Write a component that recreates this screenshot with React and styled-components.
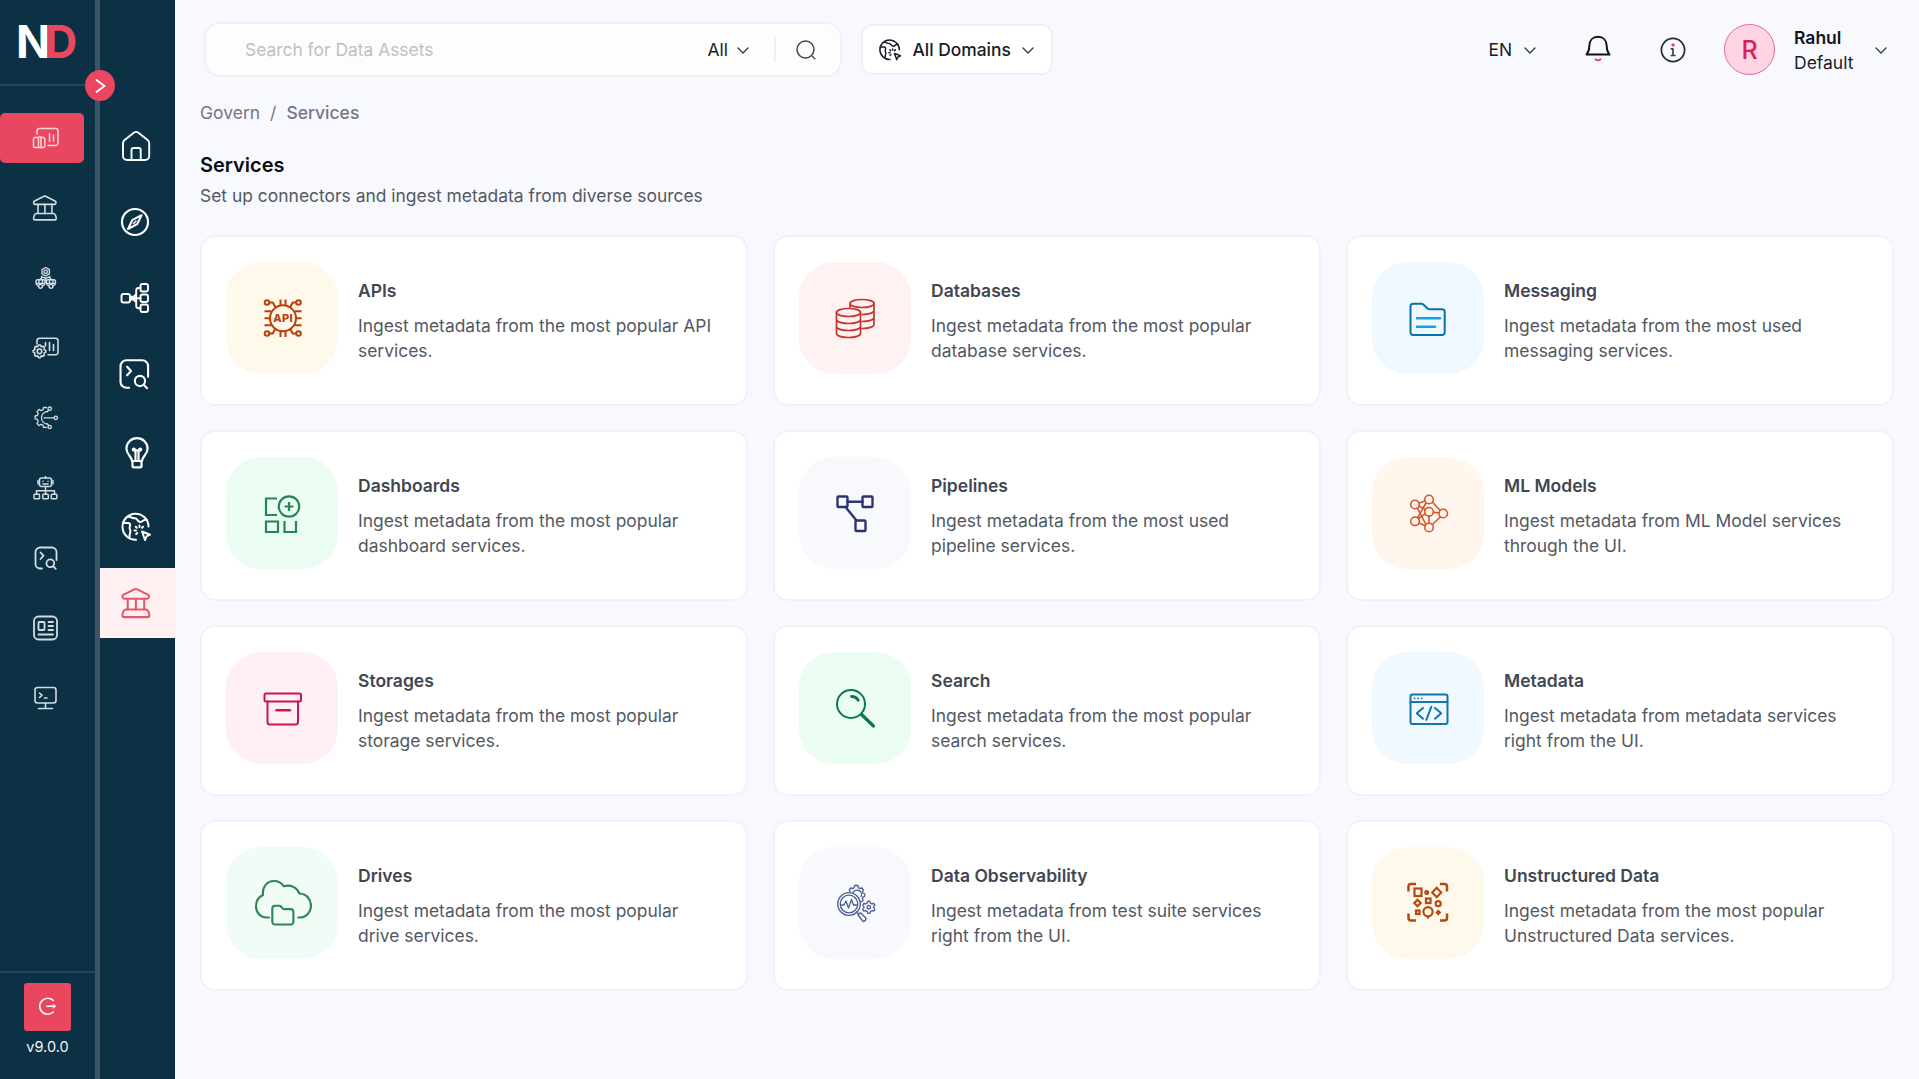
import React from "react";
import styled, { createGlobalStyle } from "styled-components";

const GlobalStyle = createGlobalStyle`
  * {
    box-sizing: border-box;
  }
  body {
    margin: 0;
    background: #f8f9fe;
    font-family: Inter, "Liberation Sans", sans-serif;
    color: #181d27;
  }
  p, h1, h2 {
    margin: 0;
  }
`;

const Page = styled.div`
  display: flex;
  height: 1079px;
  overflow: hidden;
`;

const PrimaryNav = styled.nav`
  display: flex;
  flex-direction: column;
  width: 95px;
  background: #0c3144;
`;

const Divider = styled.div`
  position: relative;
  width: 5px;
  background: #3c5566;
`;

const Toggle = styled.button`
  position: absolute;
  top: 70px;
  left: -10px;
  display: flex;
  align-items: center;
  justify-content: center;
  width: 30px;
  height: 31px;
  padding: 0;
  border: none;
  border-radius: 50%;
  background: #e9475f;
  color: #fff;
`;

const Logo = styled.div`
  height: 86px;
  padding: 13px 0 0 16px;
  border-bottom: 2px solid #234a5c;
  color: #fff;
  font-size: 45px;
  font-weight: 700;
  line-height: 58px;
  letter-spacing: -5.5px;

  span {
    color: #e9475f;
  }
`;

const PrimaryList = styled.div`
  display: flex;
  flex-direction: column;
  flex: 1;
  gap: 20px;
  padding-top: 27px;
`;

const PrimaryItem = styled.a`
  display: flex;
  align-items: center;
  width: 84px;
  height: 50px;
  padding-left: 29px;
  border-radius: 5px;
  color: ${({ $active }) => ($active ? "#fbd5da" : "#d3dce0")};
  background: ${({ $active }) => ($active ? "#e9475f" : "transparent")};
`;

const NavFooter = styled.div`
  display: flex;
  flex-direction: column;
  align-items: center;
  height: 108px;
  padding-top: 10px;
  border-top: 2px solid #234a5c;
  color: #f1f4f6;
  font-size: 14.5px;
  line-height: 32px;
`;

const LogoutButton = styled.button`
  display: flex;
  align-items: center;
  justify-content: center;
  width: 47px;
  height: 48px;
  padding: 0;
  border: none;
  border-radius: 3px;
  background: #e9475f;
  color: #fff;
`;

const SecondaryNav = styled.nav`
  display: flex;
  flex-direction: column;
  width: 75px;
  padding-top: 110px;
  background: #0c3144;
`;

const SecondaryItem = styled.a`
  display: flex;
  align-items: center;
  justify-content: center;
  height: ${({ $height }) => $height}px;
  padding-right: ${({ $inset }) => $inset || 5}px;
  margin-top: ${({ $active }) => ($active ? 6 : 0)}px;
  color: ${({ $active }) => ($active ? "#e9546b" : "#fff")};
  background: ${({ $active }) => ($active ? "#fff0f1" : "transparent")};
`;

const Main = styled.main`
  flex: 1;
  padding: 0 25px;
`;

const Header = styled.header`
  display: flex;
  align-items: center;
  height: 99px;
  padding-left: 4px;
`;

const SearchBar = styled.div`
  display: flex;
  align-items: center;
  width: 638px;
  height: 55px;
  padding: 0 24px 0 39px;
  border: 2px solid #f0f1f8;
  border-radius: 16px;
  background: #fdfdfd;
`;

const Placeholder = styled.span`
  flex: 1;
  color: #bfbfbf;
  font-size: 17.4px;
`;

const Dropdown = styled.div`
  display: flex;
  align-items: center;
  gap: ${({ $gap }) => $gap || 8}px;
  font-size: 17.4px;
  font-weight: ${({ $weight }) => $weight || 400};
  color: #181d27;
`;

const Separator = styled.div`
  width: 2px;
  height: 25px;
  margin: 0 20px 0 24px;
  background: #eff1f7;
`;

const DomainSelect = styled(Dropdown)`
  width: 192px;
  height: 51px;
  margin-left: 19px;
  padding-left: 15px;
  border: 2px solid #f0f1f8;
  border-radius: 11px;
  background: #fff;
`;

const HeaderActions = styled.div`
  display: flex;
  align-items: center;
  margin-left: auto;
  padding-right: 6px;
`;

const IconButton = styled.button`
  display: flex;
  padding: 0 0 ${({ $raise }) => $raise || 0}px;
  border: none;
  background: none;
  margin-left: ${({ $left }) => $left}px;
`;

const Avatar = styled.div`
  display: flex;
  align-items: center;
  justify-content: center;
  width: 51px;
  height: 51px;
  margin: 0 19px 0 35px;
  border: 1.5px solid #e8679a;
  border-radius: 50%;
  background: #ffd5e3;
  color: #df1c5c;
  font-size: 25px;
  font-weight: 500;
`;

const UserInfo = styled.div`
  width: 80px;
  font-size: 17.5px;
  line-height: 25px;

  strong {
    display: block;
    font-weight: 600;
    color: #111520;
  }
`;

const Breadcrumb = styled.div`
  display: flex;
  gap: 10px;
  height: 27px;
  color: #757687;
  font-size: 17.5px;
  line-height: 28px;

  span:last-child {
    font-weight: 500;
  }
`;

const PageTitle = styled.h1`
  margin-top: 25px;
  color: #0a0d12;
  font-size: 20px;
  font-weight: 600;
  line-height: 28px;
`;

const PageText = styled.p`
  margin-top: 4px;
  color: #535862;
  font-size: 17.45px;
  line-height: 26px;
`;

const CardGrid = styled.div`
  display: grid;
  grid-template-columns: repeat(3, 1fr);
  grid-auto-rows: 171px;
  gap: 24px 25px;
  margin-top: 26px;
`;

const Card = styled.article`
  display: flex;
  gap: 20px;
  padding: 25px 31px 24px 24px;
  border: 2px solid #f1f2f9;
  border-radius: 15px;
  background: #fff;
`;

const Tile = styled.div`
  display: flex;
  align-items: center;
  justify-content: center;
  flex: none;
  width: 112px;
  height: 112px;
  border-radius: 35px;
  background: ${({ $bg }) => $bg};
  color: ${({ $color }) => $color};
`;

const CardBody = styled.div`
  padding-top: 16px;
`;

const CardTitle = styled.h2`
  color: #414651;
  font-size: 17.5px;
  font-weight: 600;
  line-height: 26px;
`;

const CardText = styled.p`
  margin-top: 9px;
  color: #535862;
  font-size: 17.45px;
  line-height: 25px;
`;

const Stroke = styled.svg`
  display: block;
  flex: none;
  fill: none;
  stroke: currentColor;
  stroke-linecap: round;
  stroke-linejoin: round;
`;

const Icon = ({ size = 32, box = 32, width = 1.6, children }) => (
  <Stroke width={size} height={size} viewBox={`0 0 ${box} ${box}`} strokeWidth={width}>
    {children}
  </Stroke>
);

const Chevron = () => (
  <Stroke width="14" height="14" viewBox="0 0 14 14" strokeWidth="1.4" color="#343a46">
    <path d="M2 5l5 5 5-5" />
  </Stroke>
);

/* navigation icons, 32 x 32 */

const InsightIcon = () => (
  <Icon width={1.5}>
    <path d="M8 12V9a2.500 2.500 0 0 1 2.500-2.500h16A2.500 2.500 0 0 1 29 9v12a2.500 2.500 0 0 1-2.500 2.500H19" />
    <path d="M20.500 11.500v8M24.500 13v6" />
    <path d="M6 15.500h3.500v10H6A1.500 1.500 0 0 1 4.500 24v-7A1.500 1.500 0 0 1 6 15.500zM9.500 25.500h4.800a1.500 1.500 0 0 0 1.500-1.500v-7a1.500 1.500 0 0 0-1.500-1.500H12v10M9.500 15.500l1-1h1l.5 1" />
  </Icon>
);

const GovernIcon = ({ size, width }) => (
  <Icon size={size} width={width}>
    <path d="M15 4.300a2 2 0 0 1 1.600 0l9.800 4.900c1 .6.700 3.200-.9 3.200H6c-1.500 0-1.900-2.600-.8-3.200z" />
    <path d="M9 12.400v9.100M15.900 12.400v9.100M22.900 12.400v9.100" />
    <path d="M7.300 21.500h17.200c1.600 0 2.700 3 2.700 5 0 .9-.5 1.400-1.300 1.400H5.900c-.8 0-1.300-.5-1.300-1.400 0-2 1.100-5 2.700-5z" />
  </Icon>
);

const TeamHubIcon = () => (
  <Icon width={1.400}>
    <path d="m16.700 5.500 3.700 2.100v4.300l-3.700 2.100-3.700-2.100V7.600z" />
    <circle cx="16.700" cy="9.800" r="1.700" />
    <path d="M12.500 14.500c2 2 6.500 2 8.500 0M16.700 16v3M13 15.500l-2 2M20.500 15.500l2 2" />
    <path d="M7 21.500v-2.200a1.500 1.500 0 0 1 1.500-1.500h6a1.500 1.500 0 0 1 1.500 1.500v2.200zM17.500 21.500v-2.200a1.500 1.500 0 0 1 1.500-1.500h6a1.500 1.500 0 0 1 1.500 1.500v2.200zM10 18v3M13.500 18v3M20.500 18v3M24 18v3" />
    <circle cx="11.500" cy="24.300" r="1.900" />
    <circle cx="22" cy="24.300" r="1.900" />
    <path d="M7.500 22.500 9 23.700M15.600 22.500 14 23.700M18 22.500l1.500 1.200M26 22.500 24.500 23.700" />
  </Icon>
);

const ReportSettingsIcon = () => (
  <Icon width={1.600}>
    <path d="M8 12V8.800a2.500 2.500 0 0 1 2.500-2.500h16A2.500 2.500 0 0 1 29 8.800v11.400a2.500 2.500 0 0 1-2.500 2.500H19" />
    <path d="M16.500 10.500v3.500M20.500 10.500v8M24.500 12.500v6" />
    <path d="m8.700 14.700 1-1.700h1.600l1 1.700 2-.3 1.100 1.100-.3 2 1.700 1v1.600l-1.700 1 .3 2-1.100 1.100-2-.3-1 1.700H9.700l-1-1.700-2 .3-1.100-1.100.3-2-1.700-1v-1.600l1.700-1-.3-2 1.100-1.100z" />
    <circle cx="10.500" cy="19.300" r="2.300" />
  </Icon>
);

const AutomationIcon = () => (
  <Icon width={1.300}>
    <path d="M17.500 5.500h-3l-.5 2.300-2 .8-2-1.200-2 2 1.200 2-.8 2.100-2.300.5v2.900l2.300.5.800 2.100-1.200 2 2 2 2-1.200 2 .8.500 2.300h3" />
    <path d="M18.500 9.500c-3.500.3-6 3-6 6.300s2.500 6 6 6.300" />
    <path d="M15 15.800h10M18.500 9.500l1.300-1.700M18.500 22l1.300 1.700" />
    <circle cx="26.800" cy="15.800" r="1.700" />
    <circle cx="20.700" cy="6.700" r="1.700" />
    <circle cx="20.700" cy="25" r="1.700" />
  </Icon>
);

const BotTreeIcon = () => (
  <Icon width={1.500}>
    <rect x="10.500" y="6" width="12" height="8.500" rx="2" />
    <path d="M16.500 4.500V6M9 8.500v3.500M24 8.500v3.500M14 12h5M14 9.200h.1M19 9.200h.1M16.500 14.500v7.500M7.500 22v-3.200h18V22" />
    <rect x="5" y="22.300" width="5.500" height="4.500" rx=".8" />
    <rect x="13.800" y="22.300" width="5.500" height="4.500" rx=".8" />
    <rect x="22.300" y="22.300" width="5.500" height="4.500" rx=".8" />
  </Icon>
);

const QueryIcon = ({ size, width = 1.800 }) => (
  <Icon size={size} width={width}>
    <path d="M13 26.500h-2A4.500 4.500 0 0 1 6.500 22V10A4.500 4.500 0 0 1 11 5.500h12A4.500 4.500 0 0 1 27.500 10v8" />
    <path d="m11.500 10.500 3 3.200-3 3.300" />
    <circle cx="21.300" cy="21.300" r="3.900" />
    <path d="m24.200 24.200 2.500 2.600" />
  </Icon>
);

const NewsIcon = () => (
  <Icon width={1.800}>
    <rect x="5" y="4.500" width="23" height="23" rx="4.500" />
    <rect x="9.500" y="10" width="6" height="8" rx=".8" />
    <path d="M19.500 10H24M19.500 14H24M19.500 18H24M9.500 22.500H24" />
  </Icon>
);

const TerminalIcon = () => (
  <Icon width={1.600}>
    <rect x="6" y="5.500" width="21" height="15.500" rx="2.500" />
    <path d="m10.500 11 2.500 2.300-2.500 2.200M15.500 16H18M16.500 21v5M9.500 26.500h14" />
  </Icon>
);

const HomeIcon = () => (
  <Icon width={1.900}>
    <path d="M3 13.200c0-1.400.5-2.300 1.600-3.200l9.200-7.200c1.500-1.200 3.100-1.200 4.600 0l9.200 7.200c1.100.9 1.600 1.800 1.600 3.200v12.800a4 4 0 0 1-4 4h-18.200a4 4 0 0 1-4-4z" />
    <path d="M11.500 30V20a2 2 0 0 1 2-2h5.200a2 2 0 0 1 2 2v10" />
  </Icon>
);

const CompassIcon = () => (
  <Icon width={2.200}>
    <circle cx="16" cy="16" r="13" />
    <path d="M22.500 9.200 18.300 18l-9.300 5 4.200-8.800z" strokeWidth="2" />
    <path d="m14.500 17.500 2.500-2.500" strokeWidth="1.400" />
  </Icon>
);

const LineageIcon = () => (
  <Icon width={1.900}>
    <rect x="2.500" y="12" width="8.500" height="8.500" rx="2" />
    <rect x="21.500" y="2" width="7.500" height="7.500" rx="2" />
    <rect x="21.500" y="12.500" width="7.500" height="7.500" rx="2" />
    <rect x="21.500" y="22.500" width="7.500" height="7.500" rx="2" />
    <path d="M11 16.200h10.500M21.500 6h-1.800a2.500 2.500 0 0 0-2.500 2.500v15.200a2.500 2.500 0 0 0 2.500 2.500h1.800M11.500 14.800h3l2.500-2.500M11.500 17.600h3l2.500 2.500" />
  </Icon>
);

const BulbIcon = () => (
  <Icon width={2.200}>
    <path d="M13 24c0-4.500-5.600-6.500-5.600-12.500a10.600 10.300 0 0 1 21.200 0C28.600 17.500 23 19.500 23 24z" />
    <path d="M13.500 24v5c0 .9.500 1.400 1.400 1.400h6.200c.9 0 1.400-.5 1.400-1.400v-5M16.500 13v10M19.500 13v10" />
    <circle cx="14.800" cy="12.500" r="1" />
    <circle cx="21.200" cy="12.500" r="1" />
    <path d="M15 13.500h6" />
  </Icon>
);

const GlobeIcon = ({ size, width = 2 }) => (
  <Icon size={size} width={width}>
    <path d="M28.500 15.500A13 13 0 1 0 16 28.700" />
    <path d="M7.500 6c3-1 4.500 1.500 7.500 1.300 2.500-.1 2 3.200 5 3.700 2.500.4 2-2.500 6.500-2.200" />
    <path d="M3 11.500c3 1.500 6-.5 7 1.500s-1.500 3 0 5.500-1 3.500-.5 8" />
    <path d="m22 20.500 8 3.200-3.500 1.700-1.500 3.600z" />
    <path d="M19.500 14.500v1.500M14.500 19.500H16M15.800 15.800l1 1M23 15.800l-1 1M16.200 23l1-1" />
  </Icon>
);

const SearchIcon = () => (
  <Stroke width="20" height="20" viewBox="0 0 20 20" strokeWidth="1.500" color="#414651">
    <circle cx="9.500" cy="9.500" r="8.500" />
    <path d="m16.500 16.500 2.300 2.300" />
  </Stroke>
);

const BellIcon = () => (
  <Icon width={1.900}>
    <path d="M4.500 22.500c2.300-2.700 2.800-5 2.800-8.500 0-5.500 3.400-9.200 8.700-9.200s8.700 3.700 8.700 9.200c0 3.500.5 5.800 2.800 8.500z" stroke="#111" />
    <path d="M13.500 27.300c1.200 1.300 3.800 1.300 5 0" stroke="#ef4458" />
  </Icon>
);

const InfoIcon = () => (
  <Icon width={1.700}>
    <circle cx="16" cy="16" r="11.600" stroke="#2b2b2b" />
    <path d="M14.300 14.800H16V21M14.300 21.500h3.600" stroke="#3c4450" />
    <circle cx="16" cy="11" r="1.200" fill="#ef4458" stroke="#ef4458" strokeWidth="1" />
  </Icon>
);

const LogoutIcon = () => (
  <Stroke width="22" height="22" viewBox="0 0 22 22" strokeWidth="1.600">
    <path d="M16.300 4.500A8 8 0 1 0 16.300 16M10 10.300h8" />
    <path d="M16.500 8.500 18.700 10.300l-2.200 1.800z" fill="currentColor" strokeWidth=".6" />
  </Stroke>
);

/* card icons, 60 x 60 */

const CardIcon = ({ width = 1.600, children }) => (
  <Icon size={60} box={60} width={width}>
    {children}
  </Icon>
);

const ApiLabel = styled.text`
  fill: currentColor;
  stroke: none;
  font-family: Inter, sans-serif;
  font-size: 11px;
  font-weight: 800;
  letter-spacing: 0.3px;
`;

const ApiIcon = () => (
  <CardIcon width={2}>
    <circle cx="31" cy="30.300" r="13" />
    <circle cx="15" cy="14.500" r="2.300" />
    <circle cx="46.500" cy="14.500" r="2.300" />
    <circle cx="15" cy="45.500" r="2.300" />
    <circle cx="46.500" cy="45.500" r="2.300" />
    <path d="M17.500 14.500h3.300l2.200 4M44 14.500h-3.300l-2.200 4M17.500 45.500h3.300l2.200-4M44 45.500h-3.300l-2.200-4" />
    <path d="M28.500 11.500v5.500M33.500 11.500v5.500M28.500 43.500V49M33.500 43.500V49M12.500 23.300h6.500M12.500 30.300h5M12.500 37.300h6.500M43 23.300h6.500M44.500 30.300h5M43 37.300h6.500" strokeLinecap="butt" />
    <ApiLabel x="31" y="34.300" textAnchor="middle">API</ApiLabel>
  </CardIcon>
);

const DatabaseIcon = () => (
  <CardIcon width={1.700}>
    <ellipse cx="23.500" cy="24.500" rx="12" ry="4" />
    <path d="M11.500 24.500v21c0 2.200 5.400 4 12 4s12-1.800 12-4v-21M11.500 31.500c0 2.200 5.400 4 12 4s12-1.800 12-4M11.500 38.500c0 2.200 5.400 4 12 4s12-1.800 12-4" />
    <path d="M25 19.500v-4c0-2.200 5.400-4 12-4s12 1.800 12 4-5.400 4-12 4-12-1.800-12-4" />
    <path d="M49 15.500v21c0 2.200-5.400 4-12 4M49 22.500c0 2.200-5.400 4-12 4M49 29.500c0 2.200-5.400 4-12 4" />
  </CardIcon>
);

const MessagingIcon = () => (
  <CardIcon width={2}>
    <path d="M12.500 18.300a2.500 2.500 0 0 1 2.500-2.500h8.300a3 3 0 0 1 2 .8l4.200 3.900a3 3 0 0 0 2 .8h12.700a2.500 2.500 0 0 1 2.500 2.500v20.700a2.500 2.500 0 0 1-2.500 2.500H15a2.500 2.500 0 0 1-2.500-2.500z" />
    <path d="M19 30.200h23M19 38.800h18" stroke="#12a1e8" strokeWidth="2.600" />
  </CardIcon>
);

const DashboardIcon = () => (
  <CardIcon width={2.200}>
    <g strokeLinejoin="miter" strokeLinecap="butt">
      <path d="M25 15.500H14V32h11M14 38.500h12V49H14zM32.500 38v11H44V38" />
    </g>
    <circle cx="37" cy="23.500" r="10.200" />
    <path d="M37 19v9M32.500 23.500h9" strokeLinecap="butt" />
  </CardIcon>
);

const PipelineIcon = () => (
  <CardIcon width={2.400}>
    <rect x="12.500" y="13.500" width="10" height="10.500" rx="1" />
    <rect x="37.500" y="13.500" width="10" height="10.500" rx="1" />
    <rect x="30.500" y="37.500" width="10" height="10.500" rx="1" />
    <path d="M22.500 18.700h15M20.500 24l11 13.500" />
  </CardIcon>
);

const ModelIcon = () => (
  <CardIcon width={1.600}>
    <circle cx="17" cy="21.500" r="4.300" />
    <circle cx="17" cy="38.300" r="4.300" />
    <circle cx="31" cy="16.500" r="4.300" />
    <circle cx="31" cy="28.800" r="4.300" />
    <circle cx="31" cy="44.500" r="4.300" />
    <circle cx="45.200" cy="30.500" r="4.300" />
    <path d="m21 20 6-2M21 23l6 3.500M19.300 25l8.700 16.500M19.500 34.800 28 20M20.500 35.500l6.500-4.300M21 40l6 2.500M34.500 19.300l7.500 8M35.300 29.300l5.600.6M34.300 41.500l8-7.500M31 33v7" />
  </CardIcon>
);

const StorageIcon = () => (
  <CardIcon width={2}>
    <rect x="12.500" y="15.500" width="36.500" height="8" rx="1.500" />
    <path d="M15.500 23.500V44a2.500 2.500 0 0 0 2.500 2.500h25.500A2.500 2.500 0 0 0 46 44V23.500" />
    <path d="M24.500 32.300h13.500" strokeWidth="2.400" />
  </CardIcon>
);

const MagnifierIcon = () => (
  <CardIcon width={2}>
    <circle cx="26" cy="26" r="14" />
    <path d="m36.500 36.500 12 11.500" strokeWidth="3.200" />
    <path d="M26.500 18.500c2.800 0 5.200 1.200 6.800 3.800" strokeWidth="2.800" />
  </CardIcon>
);

const MetadataIcon = () => (
  <CardIcon width={2}>
    <rect x="12.500" y="16.500" width="37" height="29.500" rx="2" />
    <path d="M12.500 24h37" />
    <path d="M16.500 20.300h.2M20 20.300h.2M23.500 20.300h.2" strokeWidth="1.700" />
    <path d="m25 30-6.200 5.300 6.200 5.400M37 30l6.200 5.300-6.200 5.400M33.300 28.800l-5 13" />
  </CardIcon>
);

const DriveIcon = () => (
  <CardIcon width={2.100}>
    <path d="M17 44.500h-2.500C8.500 44.500 4 39.500 4 33.500c0-5.500 2.500-9.500 7-11.500C10 13.500 15.500 8 22 8c4.500 0 7.700 2 9.700 5.200 7-2 13.500 1.300 15.800 7.300C55 21 59 26.500 59 33c0 6.500-5 11.500-11.500 11.500h-1.200" />
    <path d="M20.300 35.500a2.800 2.800 0 0 1 2.800-2.800h4.200a2 2 0 0 1 1.700.8l1.600 1.900a2 2 0 0 0 1.500.7h6.500a2.800 2.800 0 0 1 2.800 2.800v9.800a2.800 2.800 0 0 1-2.800 2.800H23.100a2.800 2.800 0 0 1-2.800-2.800z" />
  </CardIcon>
);

const ObservabilityIcon = () => (
  <CardIcon width={1.300}>
    <circle cx="24" cy="31" r="11.300" />
    <circle cx="24" cy="31" r="8.800" />
    <path d="M16.500 32h2.500l2-4 2.500 7 3-8.500 2 5.500h3" />
    <path d="m25 18.500-.8-1.500 1.500-2 2.300.5 1-.5.800-2.500h3l.8 2.500 1 .5 2.300-.5 1.500 2-1 2 .5 1 1.800.8v2.500l-1.800.8-.5 1 .8 2-1.300 1.500-1.500-.3" />
    <path d="M28 19.500a4.500 4.500 0 1 1 8 4.200" />
    <path d="m42.200 30 .6-1.800h2l.6 1.800 1.600.9 1.900-.4 1 1.700-1.200 1.400v1.300l1.200 1.400-1 1.700-1.900-.4-1.600.9-.6 1.800h-2l-.6-1.800-1.600-.9-1.900.4-1-1.700 1.200-1.400v-1.300l-1.200-1.400 1-1.700 1.900.4z" />
    <circle cx="43.800" cy="34.200" r="1.800" />
    <path d="m31.500 39 2 2M33 42c.5-1.300 1.500-2 2.800-2l5.200 5.300c0 1.800-1 3-2.800 3.200z" />
  </CardIcon>
);

const UnstructuredIcon = () => (
  <CardIcon width={2.200}>
    <path d="M10.500 18.500v-5A2.500 2.500 0 0 1 13 11h5M42 11h4.500a2.500 2.500 0 0 1 2.500 2.500v5M49 40.500V45a2.500 2.500 0 0 1-2.500 2.500H42M18 47.500h-5a2.500 2.500 0 0 1-2.500-2.500v-4.500" strokeWidth="2.500" strokeLinecap="butt" />
    <g strokeLinejoin="miter">
      <rect x="16.500" y="15.500" width="7" height="7.500" />
      <path d="m38.700 14.800 4.500 4.700-4.500 4.700-4.500-4.700zM19.500 26.800l3.200 3.200-3.200 3.200-3.200-3.200zM40.300 38l1.500 1.500-1.500 1.500-1.500-1.500z" />
      <rect x="28" y="25.500" width="4.500" height="4.500" />
      <rect x="18" y="37.500" width="3.500" height="3.500" />
    </g>
    <circle cx="28.700" cy="19.500" r="1.400" />
    <circle cx="40.200" cy="30.700" r="2.500" />
    <circle cx="30" cy="38.700" r="4.600" />
    <path d="M30 44v.8" />
  </CardIcon>
);

const primaryItems = [
  InsightIcon,
  GovernIcon,
  TeamHubIcon,
  ReportSettingsIcon,
  AutomationIcon,
  BotTreeIcon,
  QueryIcon,
  NewsIcon,
  TerminalIcon,
];

const secondaryItems = [
  { icon: HomeIcon, height: 72, inset: 4 },
  { icon: CompassIcon, height: 80 },
  { icon: LineageIcon, height: 72 },
  { icon: QueryIcon, height: 80, size: 42, width: 1.600, inset: 10 },
  { icon: BulbIcon, height: 78 },
  { icon: GlobeIcon, height: 70, inset: 3 },
  { icon: GovernIcon, height: 70, size: 38, width: 1.700, inset: 4, active: true },
];

const services = [
  { name: "APIs", text: "Ingest metadata from the most popular API services.", icon: ApiIcon, bg: "#fff9eb", color: "#b93f0b" },
  { name: "Databases", text: "Ingest metadata from the most popular database services.", icon: DatabaseIcon, bg: "#fef2f2", color: "#c5352e" },
  { name: "Messaging", text: "Ingest metadata from the most used messaging services.", icon: MessagingIcon, bg: "#f0f9ff", color: "#0b70a6" },
  { name: "Dashboards", text: "Ingest metadata from the most popular dashboard services.", icon: DashboardIcon, bg: "#ebfdf3", color: "#228655" },
  { name: "Pipelines", text: "Ingest metadata from the most used pipeline services.", icon: PipelineIcon, bg: "#f8f9fd", color: "#2b356f" },
  { name: "ML Models", text: "Ingest metadata from ML Model services through the UI.", icon: ModelIcon, bg: "#fff6ed", color: "#d95530" },
  { name: "Storages", text: "Ingest metadata from the most popular storage services.", icon: StorageIcon, bg: "#fff1f3", color: "#c81650" },
  { name: "Search", text: "Ingest metadata from the most popular search services.", icon: MagnifierIcon, bg: "#ebfdf3", color: "#087a45" },
  { name: "Metadata", text: "Ingest metadata from metadata services right from the UI.", icon: MetadataIcon, bg: "#f0f9ff", color: "#1474ac" },
  { name: "Drives", text: "Ingest metadata from the most popular drive services.", icon: DriveIcon, bg: "#f0fcf5", color: "#2e8558" },
  { name: "Data Observability", text: "Ingest metadata from test suite services right from the UI.", icon: ObservabilityIcon, bg: "#f8f9fd", color: "#4e5b93" },
  { name: "Unstructured Data", text: "Ingest metadata from the most popular Unstructured Data services.", icon: UnstructuredIcon, bg: "#fff9eb", color: "#b9480e" },
];

export default function App() {
  return (
    <>
      <GlobalStyle />
      <Page>
        <PrimaryNav>
          <Logo>
            N<span>D</span>
          </Logo>
          <PrimaryList>
            {primaryItems.map((ItemIcon, index) => (
              <PrimaryItem key={index} $active={index === 0}>
                <ItemIcon />
              </PrimaryItem>
            ))}
          </PrimaryList>
          <NavFooter>
            <LogoutButton>
              <LogoutIcon />
            </LogoutButton>
            v9.0.0
          </NavFooter>
        </PrimaryNav>
        <Divider>
          <Toggle>
            <Stroke width="16" height="18" viewBox="0 0 16 18" strokeWidth="1.800">
              <path d="m4.500 3 8 6-8 6" />
            </Stroke>
          </Toggle>
        </Divider>
        <SecondaryNav>
          {secondaryItems.map(({ icon: ItemIcon, height, size, width, inset, active }, index) => (
            <SecondaryItem key={index} $height={height} $inset={inset} $active={active}>
              <ItemIcon size={size} width={width} />
            </SecondaryItem>
          ))}
        </SecondaryNav>
        <Main>
          <Header>
            <SearchBar>
              <Placeholder>Search for Data Assets</Placeholder>
              <Dropdown>
                All <Chevron />
              </Dropdown>
              <Separator />
              <SearchIcon />
            </SearchBar>
            <DomainSelect $gap={10.5} $weight={500}>
              <GlobeIcon size={24} width={2} />
              All Domains <Chevron />
            </DomainSelect>
            <HeaderActions>
              <Dropdown $gap={11}>
                EN <Chevron />
              </Dropdown>
              <IconButton $left={45} $raise={4}>
                <BellIcon />
              </IconButton>
              <IconButton $left={43}>
                <InfoIcon />
              </IconButton>
              <Avatar>R</Avatar>
              <UserInfo>
                <strong>Rahul</strong>
                Default
              </UserInfo>
              <Chevron />
            </HeaderActions>
          </Header>
          <Breadcrumb>
            <span>Govern</span>
            <span>/</span>
            <span>Services</span>
          </Breadcrumb>
          <PageTitle>Services</PageTitle>
          <PageText>Set up connectors and ingest metadata from diverse sources</PageText>
          <CardGrid>
            {services.map(({ name, text, icon: ServiceIcon, bg, color }) => (
              <Card key={name}>
                <Tile $bg={bg} $color={color}>
                  <ServiceIcon />
                </Tile>
                <CardBody>
                  <CardTitle>{name}</CardTitle>
                  <CardText>{text}</CardText>
                </CardBody>
              </Card>
            ))}
          </CardGrid>
        </Main>
      </Page>
    </>
  );
}
